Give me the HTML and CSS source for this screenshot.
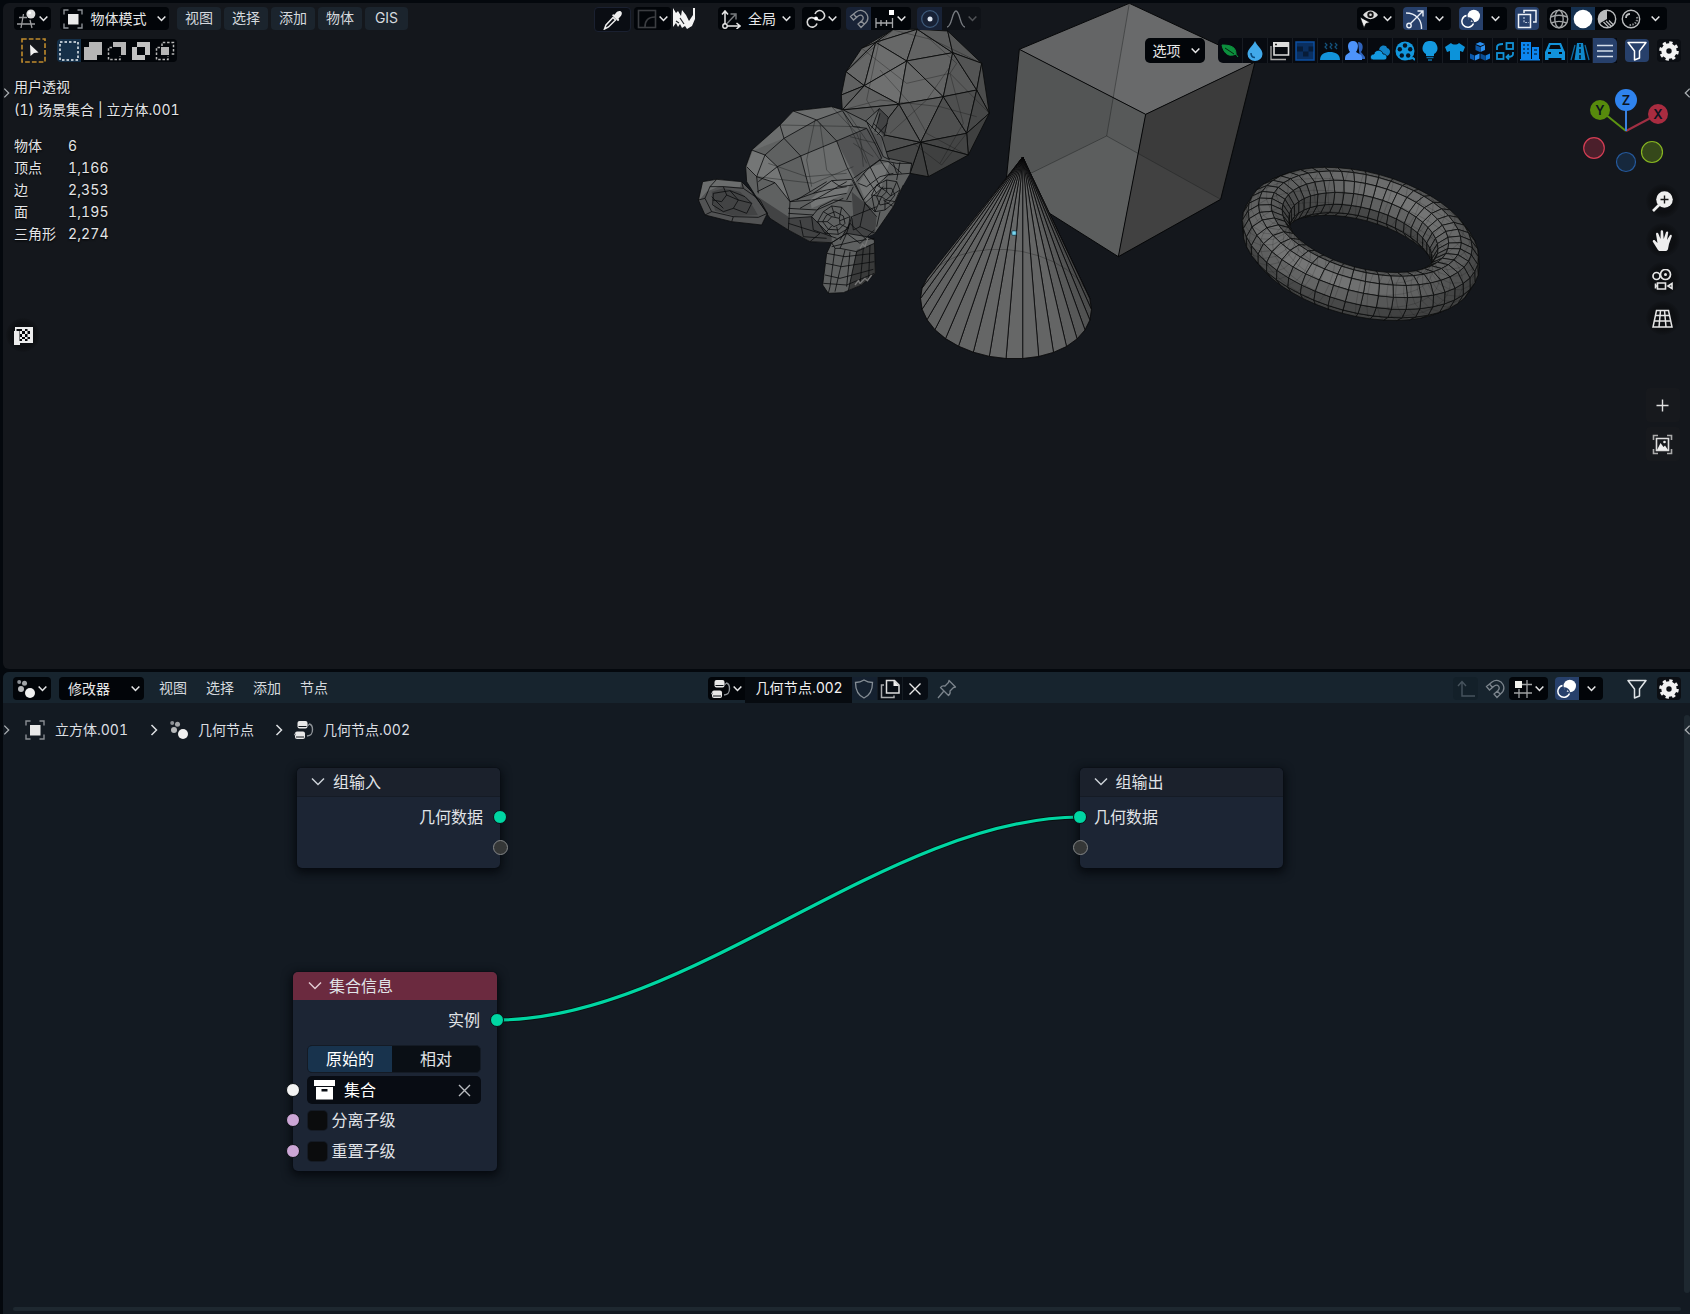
FILE: index.html
```html
<!DOCTYPE html>
<html lang="zh-CN">
<head>
<meta charset="utf-8">
<title>几何节点</title>
<link rel="stylesheet" href="styles.css">
</head>
<body>
<svg class="defs" width="0" height="0" aria-hidden="true">
  <symbol id="chev" viewBox="0 0 10 10"><path d="M1.5 3.2 5 6.8l3.500-3.600" fill="none" stroke="currentColor" stroke-width="1.400"/></symbol>
  <symbol id="right" viewBox="0 0 8 12"><path d="M1.500 1l5 5-5 5" fill="none" stroke="currentColor" stroke-width="1.500"/></symbol>
  <symbol id="editor3d" viewBox="0 0 20 20"><g fill="none" stroke="#9b9c9e" stroke-width="1.300"><path d="M0 15h18M2 8.500h8M6.500 5 4 19M13 11l2 8"/></g><circle cx="13.900" cy="5" r="4.500" fill="#dedede"/><circle cx="12.600" cy="3.800" r="1.500" fill="#fff"/></symbol>
  <symbol id="objmode" viewBox="0 0 20 20"><rect x="5" y="5" width="10.500" height="10.500" fill="#e9e9e9"/><path d="M1 5.500V1h4.500M14.500 1H19v4.500M19 14.500V19h-4.500M5.500 19H1v-4.500" fill="none" stroke="#8b8f94" stroke-width="1.400"/></symbol>
  <symbol id="dropper" viewBox="0 0 20 20"><path d="M11 5 12.500 3.500c2-2.500 4-3 5.500-2s1 3.500-1 5.500L15.500 8.500l.8 1.500-1.300 1.200-6-6L10.300 4z" fill="#eee"/><path d="M10 7.500 3 15l-1.500 4 4-2 7-7z" fill="none" stroke="#eee" stroke-width="1.500"/></symbol>
  <symbol id="magnet" viewBox="0 0 20 20"><path d="M1.500 7.500 7 3c4-3 9-1.500 11 2.500s.5 7-2.500 9.500l-3.500 3.500-3-3.500 4-3.500c1.500-1.500 1.500-3 .5-4.300s-2.800-1.200-4.300-.2L4.500 11zM4.500 5l3 3.500M15 15l-3-3.200" fill="none" stroke="currentColor" stroke-width="1.300"/></symbol>
  <symbol id="overlay" viewBox="0 0 20 20"><circle cx="12.800" cy="7" r="6.200" fill="#fff"/><path d="M5.500 6.500a6 6 0 1 0 7 8" fill="none" stroke="#fff" stroke-width="1.500"/><path d="M7 9a6 6 0 0 1 5.500 4" fill="none" stroke="#27406b" stroke-width="1.400"/><circle cx="9" cy="11" r="1.500" fill="#27406b"/></symbol>
  <symbol id="filter" viewBox="0 0 20 20"><path d="M1 1.500h18l-6.500 8.500v7L7.500 19v-9z" fill="none" stroke="currentColor" stroke-width="1.500" stroke-linejoin="round"/></symbol>
  <symbol id="gear" viewBox="0 0 20 20"><circle cx="10" cy="10" r="5.200" fill="none" stroke="#f2f2f2" stroke-width="5"/><circle cx="10" cy="10" r="8" fill="none" stroke="#f2f2f2" stroke-width="3.600" stroke-dasharray="3.140 3.140"/></symbol>
  <symbol id="geonodes" viewBox="0 0 20 20"><circle cx="3.200" cy="3" r="2" fill="#8d9196"/><circle cx="8.500" cy="4.200" r="2.500" fill="#a2a5a8"/><circle cx="5" cy="10" r="3" fill="#b6b8ba"/><circle cx="14" cy="14" r="5" fill="#f0f0f0"/></symbol>
  <symbol id="tree" viewBox="0 0 20 20"><rect x="3.500" y="1" width="10" height="7.500" rx="2" fill="#e8e8e8"/><rect x="1" y="11.500" width="10" height="7.500" rx="2" fill="#e8e8e8"/><path d="M4.500 6.500h8M2 17h8" stroke="#10161c" stroke-width="1"/><path d="M15 4c2.500.3 3.500 1.500 3.500 5.500s-1 6-5.500 6.500M0 14.500h2M13 5h2" fill="none" stroke="#8e9398" stroke-width="1.400"/></symbol>
</svg>

<div class="app">
<section class="viewport">
  <svg class="scene" id="scene" width="1690" height="669" viewBox="0 0 1690 669">
    <g id="sphere"></g>
    <g class="cube" transform="translate(980) scale(.33333)">
      <path fill="#696a6b" d="M448 10 825 186 497 343 118 148z"/>
      <path fill="#575959" d="M118 148 497 343 415 770 77 557z"/>
      <path fill="#3b3b3b" d="M497 343 825 186 722 598 415 770z"/>
      <path fill="#fff" opacity=".035" d="M380 408 77 557 415 770 722 598z"/>
      <path fill="#000" opacity=".04" d="M380 408 448 10 118 148 77 557z"/>
      <path class="dim" d="M448 10 380 408 77 557M380 408 722 598"/>
      <path class="edge" d="M448 10 825 186 722 598 415 770 77 557 118 148zM118 148 497 343 825 186M497 343 415 770"/>
    </g>
    <g class="monkey" transform="translate(680) scale(.33333)">
      <path class="f3" d="M68 545 110 538 185 545 215 575 262 640 245 675 155 665 75 645 55 600z"/>
      <path class="f2" d="M95 575 130 565 180 575 210 605 235 645 165 648 105 632z"/>
      <path class="f5" d="M68 545 110 538 185 545 180 562 120 558 80 575 58 600z"/>
      <path class="f3" d="M210 600 240 625 262 640 245 675 165 660 235 648z"/>
      <path class="f4" d="M340 333 455 320 490 330 560 365 605 410 625 475 695 490 690 520 670 555 640 620 585 700 500 735 455 728 390 725 325 690 270 655 225 585 200 545 197 500 215 450 300 375z"/>
      <path class="f5" d="M340 333 455 320 487 332 410 360 312 415 218 452 300 375zM362 468 470 423 530 545 390 575z"/>
      <path class="f6" d="M218 452 255 465 292 500 330 605 285 548 230 530 200 500zM455 542 515 540 500 580 395 625 390 600zM570 500 630 485 600 570 560 610 535 550z"/>
      <path class="f2" d="M325 655 395 650 455 710 455 728 390 725 325 690zM515 575 555 610 590 650 585 700 500 735 490 700 520 650zM270 655 225 585 325 650 325 690z"/>
      <path class="f3" d="M470 423 560 385 605 410 610 470 550 510 530 540z"/>
      <path class="f4" d="M555 360 598 326 625 352 612 410 575 395z"/><path class="f2" d="M598 326 625 352 612 410 592 385z"/>
      <path class="f4" d="M455 728 500 700 560 710 583 720 586 820 545 855 490 878 445 880 428 855 440 760z"/>
      <path class="f1" d="M530 750 583 730 586 820 545 855 505 872z"/>
      <path class="dim" d="M300 375 540 380M230 530 400 550 520 500M405 360 380 480 395 560M420 370 440 510 470 540M265 490 380 530 500 520M500 335 600 480M490 335 560 490M510 410 590 430M520 430 580 470M540 400 550 500M455 320 530 400 570 500"/>
      <g class="edge">
        <path d="M68 545 110 538 185 545 215 575 262 640 245 675 155 665 75 645 55 600zM110 538 90 560 75 595 95 635 75 645M185 545 190 565 130 560 90 560M190 565 240 600 262 640M55 600 75 595M95 635 160 650 235 652 262 640M100 580 150 572 195 590 215 610M100 580 98 615 130 635M130 560 140 585 125 605 98 600M150 572 175 600 215 610 200 640M140 585 175 600 160 625 130 635M160 625 200 640M95 590 130 625M155 665 160 650"/>
        <path d="M340 333 455 320 490 330 560 365 605 410 625 475 695 490 690 520M585 700 640 620 670 555M455 728 390 725 325 690 270 655 225 585 200 545 197 500 215 450 300 375 340 333M340 333 410 360 487 332M410 360 312 415 255 465 230 530M410 360 470 423 560 385M312 415 362 468 292 500 235 545M362 468 470 423 500 500 550 600M292 500 330 605 400 580 455 542 515 538M255 465 292 500M215 450 255 465M362 468 390 575M300 375 312 415M200 500 230 530 235 580M232 575 285 548 330 605 325 690M230 530 285 548M487 332 520 380 560 385 590 440 605 475 570 500 520 535M560 365 610 470 630 480M555 365 598 326 625 352 612 410M575 385 598 326M585 395 600 340M592 405 622 370M580 370 612 400"/>
        <path d="M325 655 395 650 455 710M330 605 395 600 500 580M325 625 410 630 490 595M325 640 400 645M395 650 420 620 460 600 515 605M455 542 480 560 520 555M400 580 440 570 500 560M350 600 440 545M360 625 500 545M515 538 555 610 590 650M520 560 500 600M390 725 420 700 325 670M360 660 370 710 440 715M395 650 400 690 470 715M515 650 520 690 540 680 585 700M540 680 555 610 610 560M455 728 500 700 540 730 583 690M500 700 515 650 590 620M480 720 510 670 560 720"/>
        <path d="M413 665 430 635 455 618 485 622 510 650 505 685 475 703 435 700zM428 665 440 645 465 635 490 648 495 670 475 690 445 688zM442 665 455 650 478 655 480 672 462 680zM413 665H442M430 635 455 650M455 618 465 650M485 622 478 655M510 650 480 662M505 685 480 672M475 703 470 680M435 700 455 678"/>
        <path d="M530 545 560 510 600 480 650 490 695 490M550 600 575 570 625 525 690 520M535 550 560 560 600 530 640 520M570 500 600 560M550 520 590 580M600 480 630 525M640 490 650 520M625 485 665 520M660 487 650 540M575 585 590 555 620 540 650 545 660 570 645 605 615 630 585 635zM590 590 605 565 635 565 645 585 625 610 600 615zM605 590 620 575 632 588 618 600zM575 585 605 590M590 555 620 575M620 540V575M650 545 632 588M660 570 632 588M645 605 618 600M615 630V600M585 635 605 590M610 600 640 620M600 635 590 680M555 610 585 635"/>
        <path d="M455 728 500 700 560 710 583 720 586 820 545 855 490 878 445 880 428 855 440 760zM455 728 465 745 450 860 445 880M500 700 480 745 530 755 583 730M465 745 480 745M530 755 505 872M495 750 480 810 465 875M440 760 495 770 583 760M438 790 485 800 583 785M435 825 480 835 580 808M430 850 500 855 583 820M550 745 540 855M570 735 566 835M510 755 500 860M455 740 520 725 583 715"/>
      </g>
      <path d="M525 855 535 842 540 850 555 835 562 842 575 825M540 745 548 732 555 740 563 715" fill="none" stroke="#777" stroke-width="4"/>
    </g>
    <g id="cone"></g>
    <g id="torus"></g>
    <rect x="1011.800" y="230.800" width="4.500" height="4.500" rx="1" fill="#7ad7f0" stroke="#103040" stroke-width=".8"/>
  </svg>

  <header class="bar row1">
    <div class="left">
      <button class="btn w37"><svg class="i20"><use href="#editor3d"/></svg><svg class="c10"><use href="#chev"/></svg></button>
      <button class="btn mode"><svg class="i20"><use href="#objmode"/></svg><span>物体模式</span><svg class="c10"><use href="#chev"/></svg></button>
      <nav class="menus"><a>视图</a><a>选择</a><a>添加</a><a>物体</a><a>GIS</a></nav>
    </div>
    <div class="center">
      <button class="btn outlined w37"><svg class="i20"><use href="#dropper"/></svg></button>
      <button class="btn w37 g3 end"><svg class="i20 faint" viewBox="0 0 20 20"><rect x="1.500" y="1.500" width="17" height="17" fill="none" stroke="#3b3d41" stroke-width="1.600"/><path d="M8 18c0-7 3-10 10-10" fill="none" stroke="#3b3d41" stroke-width="1.600"/></svg><svg class="c10"><use href="#chev"/></svg></button>
      <span class="g2 tex"><svg width="23" height="22" viewBox="0 0 23 22"><rect width="23" height="22" fill="#16191e"/><path fill="#f4f4f4" d="M0 1 3 6 5 4 8 9 9 3 13 8 16 14 18 11 20 8 20 1 22 1 22 12 19 19 14 22 12 19 9 21 7 17 5 20 3 16 0 20z"/><path d="M7 11 11 17M3 14 6 16" stroke="#24272b" stroke-width="1.200"/></svg></span>
      <button class="btn orient"><svg class="i20" viewBox="0 0 20 20"><path d="M4 15V3M1 5.500 4 2l3 3.500M6 17h12M15.500 14 19 17l-3.500 3" fill="none" stroke="#e6e6e6" stroke-width="1.500"/><circle cx="4" cy="17" r="2.200" fill="none" stroke="#e6e6e6" stroke-width="1.400"/><path d="M6 14.500 14 6M9.500 5H15v5.500" fill="none" stroke="#7a7d80" stroke-width="1.400"/></svg><span>全局</span><svg class="c10"><use href="#chev"/></svg></button>
      <button class="btn pivot"><svg class="i20" viewBox="0 0 20 20"><path d="M9 5c1-3 5-5 8-2s1.500 7-2 8c-1.500.5-3 0-4.500-1" fill="none" stroke="#d8d8d8" stroke-width="1.600"/><path d="M11 14.500c-1 4-5.500 4.500-8 2.500S.8 11 3 9.500s4-1 5.500 0" fill="none" stroke="#d8d8d8" stroke-width="1.600"/><circle cx="10" cy="9.500" r="2" fill="#fff"/></svg><svg class="c10"><use href="#chev"/></svg></button>
      <div class="grp g6"><button class="btn tint w25 mag"><svg class="i20"><use href="#magnet"/></svg></button><button class="btn w40"><svg class="i20" viewBox="0 0 20 20"><path d="M1 9v10M1 14h17M6 11v6M11.500 11v6M17.500 9v10" stroke="#a5a7a9" stroke-width="1.300"/><rect x="14" y="1" width="5" height="5" fill="#fff"/></svg><svg class="c10"><use href="#chev"/></svg></button></div>
      <div class="grp g7"><button class="btn tint w25"><svg class="i20" viewBox="0 0 20 20"><circle cx="10" cy="10" r="8.300" fill="none" stroke="#3c5878" stroke-width="1.300"/><circle cx="10" cy="10" r="2.500" fill="#dfe6ef"/></svg></button><button class="btn ghost w39"><svg class="i20" viewBox="0 0 20 20"><path d="M1 18c5 0 5-16 9-16s4 16 9 16" fill="none" stroke="#777b80" stroke-width="1.400"/></svg><svg class="c10 dimmed"><use href="#chev"/></svg></button></div>
    </div>
    <div class="rightside">
      <button class="btn w38 eye"><svg class="i20" viewBox="0 0 20 20"><path d="M4 6c4-6 11-6 15 0-4 5.500-11 5.500-15 0z" fill="#ddd"/><circle cx="11.500" cy="5.700" r="3.200" fill="#111"/><circle cx="11.500" cy="5.700" r="1.300" fill="#ddd"/><path d="M1 8l10 5.500-4 1L5 19z" fill="#eee" stroke="#020406" stroke-width=".7"/></svg><svg class="c10"><use href="#chev"/></svg></button>
      <div class="grp"><button class="btn on w24"><svg class="i20" viewBox="0 0 20 20"><path d="M1 4c10 0 16 7 15.500 16M5 15 18 2M12.500 2H18v5.500" fill="none" stroke="#e8edf5" stroke-width="1.400"/><circle cx="4" cy="16.500" r="2.200" fill="none" stroke="#e8edf5" stroke-width="1.400"/></svg></button><button class="btn w24"><svg class="c10"><use href="#chev"/></svg></button></div>
      <div class="grp"><button class="btn on w24"><svg class="i20"><use href="#overlay"/></svg></button><button class="btn w24"><svg class="c10"><use href="#chev"/></svg></button></div>
      <button class="btn on w24"><svg class="i20" viewBox="0 0 20 20"><path d="M7 4V1.500h12V13h-3M1.500 5.500h12v13h-12z" fill="none" stroke="#f0f3f8" stroke-width="1.500"/><path d="M7 8v5.500h5" fill="none" stroke="#b9c6da" stroke-width="1.200" stroke-dasharray="2 1.300"/></svg></button>
      <div class="grp shade"><button class="btn w24"><svg class="i20" viewBox="0 0 20 20"><g fill="none" stroke="#a0a2a4" stroke-width="1.400"><circle cx="10" cy="10" r="8.700"/><ellipse cx="10" cy="10" rx="4.200" ry="8.700"/><path d="M1.500 8c5-2 12-2 17 0M2 14c5-2 11-2 16 0"/></g></svg></button><button class="btn navy w24"><svg class="i20" viewBox="0 0 20 20"><circle cx="10" cy="10" r="9.300" fill="#fff"/></svg></button><button class="btn w24"><svg class="i20" viewBox="0 0 20 20"><path d="M10 1.300A8.700 8.700 0 0 0 2.500 14.500L10 10z" fill="#b9bbbd"/><circle cx="10" cy="10" r="8.700" fill="none" stroke="#b9bbbd" stroke-width="1.400"/><path d="M9 12l5.500 5.500M6.500 13l5 5M12 11.500l4.500 4.500" fill="none" stroke="#b9bbbd" stroke-width="1.300"/></svg></button><button class="btn w24"><svg class="i20" viewBox="0 0 20 20"><circle cx="10" cy="10" r="8.700" fill="none" stroke="#b9bbbd" stroke-width="1.400"/><path d="M5 9c0-2.500 1.500-4 4-4" fill="none" stroke="#b9bbbd" stroke-width="1.800"/><path d="M16 8c1 5-3 8.500-8 8" fill="none" stroke="#85888b" stroke-width="2.200" stroke-dasharray="1.500 1.300"/></svg></button><button class="btn w24"><svg class="c10"><use href="#chev"/></svg></button></div>
    </div>
  </header>

  <div class="bar row2">
    <div class="tool"><svg width="25" height="25" viewBox="0 0 25 25"><rect x="1" y="1" width="23" height="23" fill="none" stroke="#c08c2c" stroke-width="1.600" stroke-dasharray="4.700 2.100"/><path d="M9 6.500 17.500 14.500 13 15 9.500 18z" fill="#f0f0f0"/></svg></div>
    <div class="grp seltools">
      <button class="btn navy2"><svg class="i20" viewBox="0 0 20 20"><rect x="1" y="1" width="18" height="18" fill="none" stroke="#e9f0f5" stroke-width="1.500" stroke-dasharray="2.500 2"/></svg></button>
      <button class="btn"><svg class="i20" viewBox="0 0 20 20"><path d="M6 1h13v13h-5v5H1V6h5z" fill="#b5b5b5"/></svg></button>
      <button class="btn"><svg class="i20" viewBox="0 0 20 20"><path d="M6 1h13v13h-5V6H6z" fill="#b5b5b5"/><path d="M5 6.500H1.500V18.500H13V15" fill="none" stroke="#b5b5b5" stroke-width="1.500" stroke-dasharray="2.500 1.800"/></svg></button>
      <button class="btn"><svg class="i20" viewBox="0 0 20 20"><path fill-rule="evenodd" d="M6 1h13v13h-5v5H1V6h5zM6 6v8h8V6z" fill="#c2c2c2"/></svg></button>
      <button class="btn"><svg class="i20" viewBox="0 0 20 20"><rect x="6" y="6" width="8" height="8" fill="#b5b5b5"/><path d="M7 5V1.500H18.500V13H15M5 6.500H1.500V18.500H13V15" fill="none" stroke="#b5b5b5" stroke-width="1.500" stroke-dasharray="2.500 1.800"/></svg></button>
    </div>
    <div class="row2right">
      <button class="btn options"><span>选项</span><svg class="c10"><use href="#chev"/></svg></button>
      <div class="strip">
        <i><svg class="i20" viewBox="0 0 20 20"><path d="M2 4c9 0 14 2 14 9-6 3-12 1-14-9zM15 12l3 4" fill="#0c8f3d" stroke="#0c8f3d"/><path d="M5 7l9 6" stroke="#05230f" stroke-width="1"/></svg></i>
        <i><svg class="i20" viewBox="0 0 20 20"><path d="M10 0c2 5 7.500 8 7.500 13a7.500 7 0 0 1-15 0c0-5 5.500-8 7.500-13z" fill="#41a9ea"/><path d="M6 12c0 3 2 4.500 4 4.500" fill="none" stroke="#0a4d80" stroke-width="1.600"/></svg></i>
        <i><svg class="i20" viewBox="0 0 20 20"><path d="M4 2h14.500v12H4z" fill="none" stroke="#ddd" stroke-width="1.600"/><path d="M3 1h16v5H3z" fill="#ddd"/><path d="M5 3.500h2" stroke="#222" stroke-width="1.500"/><path d="M1 5v13.500h15" fill="none" stroke="#aaa" stroke-width="1.300"/></svg></i>
        <i><svg class="i20" viewBox="0 0 20 20"><rect x="1" y="1" width="18" height="18" fill="#0a2f60" stroke="#0d4fa0" stroke-width="1.500"/><path d="M2 5.500h6v5H2zM8 10.500h5.500v5H8zM13.500 5.500h4.700v5h-4.700z" fill="#071c38"/></svg></i>
        <i><svg class="i20" viewBox="0 0 20 20"><path d="M0 19c0-6 5-8 10-8s10 2 10 8z" fill="#1394dc"/><path d="M5 2l2 2-2 2 2 2M10 2l2 2-2 2 2 2M15 2l2 2-2 2 2 2" fill="none" stroke="#14527c" stroke-width="1.200"/></svg></i>
        <i><svg class="i20" viewBox="0 0 20 20"><path d="M13 1c5 0 6 6 3 10l4 5v2h-5z" fill="#2e62bb"/><path d="M8 0c6 0 6 7 3 11l5 3c1 1 1 3 1 5H0c0-2 0-4 1-5l4-3C2 7 2 0 8 0z" fill="#4d93fa"/></svg></i>
        <i><svg class="i20" viewBox="0 0 20 20"><path d="M9 10c0-6 7-7 8-3 4 1 4 6 0 8l-4-1z" fill="#1283c7"/><path d="M3 19c-4-1-3-6 1-6 1-5 8-5 9 0 5 0 5 6 1 6z" fill="#149ae0" stroke="#070a10" stroke-width=".8"/></svg></i>
        <i><svg class="i20" viewBox="0 0 20 20"><circle cx="10" cy="10" r="9.500" fill="#1297dd"/><g fill="#061522"><circle cx="10" cy="4.500" r="2.200"/><circle cx="15.200" cy="8.300" r="2.200"/><circle cx="13.200" cy="14.500" r="2.200"/><circle cx="6.800" cy="14.500" r="2.200"/><circle cx="4.800" cy="8.300" r="2.200"/></g><path d="M14 18l4-1 2 2" stroke="#1297dd" stroke-width="2"/></svg></i>
        <i><svg class="i20" viewBox="0 0 20 20"><path d="M10 0a7 7 0 0 1 4 13v2H6v-2A7 7 0 0 1 10 0z" fill="#1499df"/><path d="M6.500 16.500h7M8 19h4" stroke="#0f6fa6" stroke-width="1.500"/></svg></i>
        <i><svg class="i20" viewBox="0 0 20 20"><path d="M6 2c2 2 6 2 8 0l6 4-2 5-3-1v9H5v-9l-3 1-2-5z" fill="#0c93da"/></svg></i>
        <i><svg class="i20" viewBox="0 0 20 20"><path d="M5.500 4 10 6v5L5.500 9zM0 12.500l4.500 2v5L0 17.500z" fill="#0b57a8"/><path d="M10.500 6 15 4v5l-4.500 2zM5 14.500l4.500-2v5L5 19.500zM5.500 3 10 1l5 2-4.500 2z" fill="#2a8ff0"/><path d="M10.500 12.500l4.500 2v5l-4.500-2z" fill="#0b4d92"/><path d="M15.500 14.500l4.500-2v5l-4.500 2z" fill="#167fdd"/></svg></i>
        <i><svg class="i20" viewBox="0 0 20 20"><g fill="none" stroke="#1292d6" stroke-width="1.800"><rect x="11.500" y="2" width="6.500" height="6"/><rect x="2" y="12" width="6.500" height="6"/><path d="M2 9V6q0-3 6-3M18 11v2q0 3-6 3M14 13.500 11.500 16l2.500 2.500"/></g></svg></i>
        <i><svg class="i20" viewBox="0 0 20 20"><path d="M1 1h10v18H1zM12 6h7v13h-7zM0 18h20v1.500H0z" fill="#0c86ef"/><path d="M3 4h2M7 4h2M3 8h2M7 8h2M3 12h2M7 12h2M14 9h3M14 13h3" stroke="#06335e" stroke-width="1.500"/></svg></i>
        <i><svg class="i20" viewBox="0 0 20 20"><path fill-rule="evenodd" d="M4 2h12l2.500 6 1.500 3v8h-3.500v-2h-13v2H0v-8l1.500-3zM5.500 4 4 8h12l-1.500-4zM3 11v2h3v-2zM14 11v2h3v-2z" fill="#1292da"/></svg></i>
        <i><svg class="i20" viewBox="0 0 20 20"><path d="M7 2h6l2.500 17h-11z" fill="#1089cc"/><path d="M10 3v3M10 8v4M10 14v4" stroke="#041421" stroke-width="1.500"/><path d="M5 4 1 19M15 4l4 15" stroke="#0d6ba2" stroke-width="1.300"/></svg></i>
        <i class="sel"><svg class="i20" viewBox="0 0 20 20"><path d="M2 4.500h16M2 10h16M2 15.500h16" stroke="#d5deea" stroke-width="1.300"/></svg></i>
      </div>
      <button class="btn on w24 fil"><svg class="i20"><use href="#filter"/></svg></button>
      <button class="btn gearb w24"><svg class="i20"><use href="#gear"/></svg></button>
    </div>
  </div>

  <div class="vbody">
    <div class="info">
      <p>用户透视</p>
      <p class="path">(1) 场景集合 | 立方体.001</p>
      <dl><dt>物体</dt><dd>6</dd><dt>顶点</dt><dd>1,166</dd><dt>边</dt><dd>2,353</dd><dt>面</dt><dd>1,195</dd><dt>三角形</dt><dd>2,274</dd></dl>
      <div class="round checker"><svg width="19" height="19" viewBox="0 0 19 19"><path fill="#ececec" d="M1 1h18v16H6v2H0V5h1z"/><path fill="#07090b" d="M2.500 3H8v2H5.500v10H5V5H2.500zM11 3h2.500v2H11zM8 5h3v3H8zM13.500 5H16v3h-2.500zM11 8h2.500v3H11zM6 8h2v3H6zM8 11h3v2H8zM13.500 11H16v2h-2.500zM11 13h2.500v2H11zM6 13h2v2H6z"/></svg></div>
    </div>
    <div class="navcol">
      <svg class="gizmo" width="90" height="90" viewBox="1580 85 90 90">
        <path d="M1626 131 1600 110" stroke="#5d9412" stroke-width="2"/><path d="M1626 131 1658 114" stroke="#a02f43" stroke-width="2"/><path d="M1626 131V100" stroke="#3a82e0" stroke-width="2"/>
        <circle cx="1594" cy="148" r="10.300" fill="#4b1f2b" stroke="#d23d53" stroke-width="1.200"/><circle cx="1626" cy="162" r="9.500" fill="#16283d" stroke="#25599c" stroke-width="1.200"/><circle cx="1652" cy="152" r="10.500" fill="#35481a" stroke="#86b421" stroke-width="1.200"/>
        <circle cx="1600" cy="110" r="10" fill="#578a0c"/><circle cx="1658" cy="114" r="10" fill="#a92c40"/><circle cx="1626" cy="100" r="11" fill="#2f83ee"/>
        <text x="1600" y="114.700">Y</text><text x="1658" y="118.700">X</text><text x="1626" y="104.700">Z</text>
      </svg>
      <div class="round z1"><svg class="i21" viewBox="0 0 21 21"><circle cx="12.500" cy="8.500" r="8.300" fill="#eee"/><path d="M7 14l-6 6" stroke="#eee" stroke-width="2.600"/><path d="M8.500 8.500h8M12.500 4.500v8" stroke="#151515" stroke-width="1.400"/></svg></div>
      <div class="round"><svg class="i21" viewBox="0 0 21 21"><path d="M6 20 1 12c-1-1.500 1-2.500 2-1.500l2.500 2.500L4 4c0-1.500 2-1.800 2.400-.3L8.500 9 8.700 1.500c0-1.600 2.200-1.600 2.400 0L11.700 9 14 2.300c.5-1.500 2.400-1 2.200.5L15 10l2.700-4.500c.9-1.300 2.600-.4 2 1L17 14l-1 5c-.3 1-1 1.700-2 2H8c-1 0-1.500-.5-2-1z" fill="#eee"/></svg></div>
      <div class="round cam"><svg class="i21" viewBox="0 0 21 21"><circle cx="4.500" cy="7" r="3.500" fill="none" stroke="#e6e6e6" stroke-width="1.700"/><circle cx="13.500" cy="5.500" r="5" fill="none" stroke="#e6e6e6" stroke-width="1.700"/><circle cx="13.500" cy="5.500" r="1.500" fill="#e6e6e6"/><path d="M5.500 14h8v6h-8zM5.500 17H3.500M3.500 14.500v5M20 14.500l-4 2.500 4 2.500z" fill="none" stroke="#e6e6e6" stroke-width="1.600"/></svg></div>
      <div class="round"><svg class="i21" viewBox="0 0 21 21"><path d="M4.500 2.500h12l3.500 16.500H1zM3.500 7.500h14M2.500 13h16M8.500 2.500 7 19M12.500 2.500 14 19" fill="none" stroke="#e6e6e6" stroke-width="1.500"/></svg></div>
      <div class="round flatbg plus"><svg class="i21" viewBox="0 0 21 21"><path d="M4.500 10.500h12M10.500 4.500v12" stroke="#e0e0e0" stroke-width="1.400"/></svg></div>
      <div class="round flatbg"><svg class="i21" viewBox="0 0 21 21"><path d="M1.500 6V1.500H6M15 1.500h4.500V6M19.500 15v4.500H15M6 19.500H1.500V15" fill="none" stroke="#aaa" stroke-width="1.600"/><path d="M4.500 4.500h12v12h-12z" fill="none" stroke="#ddd" stroke-width="1.600"/><path d="M5 16l3.500-7 3 4 1.500-1.500 3 4.500z" fill="#eee"/><circle cx="12.500" cy="8" r="1.300" fill="#eee"/></svg></div>
    </div>
  </div>
  <svg class="tab tl" width="8" height="12"><use href="#right"/></svg>
  <svg class="tab tr" width="8" height="12"><use href="#right"/></svg>
</section>

<section class="nodes">
  <header class="bar nhead">
    <div class="nleft">
      <button class="btn w38"><svg class="i20"><use href="#geonodes"/></svg><svg class="c10"><use href="#chev"/></svg></button>
      <button class="btn modifier"><span>修改器</span><svg class="c10"><use href="#chev"/></svg></button>
      <nav class="flat"><a>视图</a><a>选择</a><a>添加</a><a>节点</a></nav>
    </div>
    <div class="ncenter">
      <button class="btn w37 sq"><svg class="i20"><use href="#tree"/></svg><svg class="c10"><use href="#chev"/></svg></button>
      <span class="name">几何节点.002</span>
      <span class="mini shield"><svg class="i20" viewBox="0 0 20 20"><path d="M10 1c3 2 5.500 2.500 8.500 2.500C18.500 11 16.500 16 10 19 3.500 16 1.500 11 1.500 3.500 4.500 3.500 7 3 10 1z" fill="none" stroke="#858d95" stroke-width="1.300"/></svg></span>
      <span class="mini"><svg class="i20" viewBox="0 0 20 20"><path d="M6.500 1.500h8l4.500 4.500v8H6.500z" fill="none" stroke="#ddd" stroke-width="1.500"/><path d="M13.500 1v6H19z" fill="#eee"/><path d="M4 6H1.500v12.500H14V16.500" fill="none" stroke="#a9abad" stroke-width="1.500"/></svg></span>
      <span class="mini last"><svg class="i20" viewBox="0 0 20 20"><path d="M4.500 4.500l11 11M15.500 4.500l-11 11" stroke="#e8e8e8" stroke-width="1.400"/></svg></span>
      <svg class="i20 pin" viewBox="0 0 20 20"><path d="M12 1.500 18.500 8l-2 .5-3.500 3.500c.5 2 0 3.500-1.500 4.500l-8-8c1-1.500 2.500-2 4.500-1.500l3.500-3.500zM6.500 12.500 1 19" fill="none" stroke="#7b848c" stroke-width="1.300" stroke-linejoin="round"/></svg>
    </div>
    <div class="nright">
      <span class="mini up"><svg class="i20" viewBox="0 0 20 20"><path d="M6 3v14h13M2 7l4-4.500L10 7" fill="none" stroke="#47535d" stroke-width="1.400"/></svg></span>
      <span class="nmag"><svg class="i20"><use href="#magnet"/></svg></span>
      <button class="btn w39"><svg class="i20" viewBox="0 0 20 20"><path d="M6 10v9M14 1v18M9 5.500h10M1 14h18" stroke="#a0a2a4" stroke-width="1.300"/><rect x="2" y="2" width="7" height="7" fill="#f2f2ee"/></svg><svg class="c10"><use href="#chev"/></svg></button>
      <div class="grp nover"><button class="btn on w24"><svg class="i20"><use href="#overlay"/></svg></button><button class="btn w24"><svg class="c10"><use href="#chev"/></svg></button></div>
      <span class="nfil"><svg class="i20"><use href="#filter"/></svg></span>
      <button class="btn gearb w24"><svg class="i20"><use href="#gear"/></svg></button>
    </div>
  </header>
  <div class="crumbs">
    <svg class="i20"><use href="#objmode"/></svg><span class="c1">立方体.001</span>
    <svg class="sep" width="8" height="12"><use href="#right"/></svg>
    <svg class="i20"><use href="#geonodes"/></svg><span class="c2">几何节点</span>
    <svg class="sep" width="8" height="12"><use href="#right"/></svg>
    <svg class="i20"><use href="#tree"/></svg><span class="c3">几何节点.002</span>
  </div>

  <svg class="links" width="1690" height="642" viewBox="0 672 1690 642"><path d="M497 1020C688 1020 889 817 1080 817" fill="none" stroke="#07110f" stroke-width="5"/><path d="M497 1020C688 1020 889 817 1080 817" fill="none" stroke="#00d6a3" stroke-width="3.200"/></svg>

  <article class="node n-in">
    <h3><svg width="14" height="9" viewBox="0 0 14 9"><path d="M1 1.500l6 6 6-6" fill="none" stroke="#ccd1d7" stroke-width="1.500"/></svg>组输入</h3>
    <div class="out">几何数据</div>
    <b class="sock geo s-a"></b><b class="sock ext s-b"></b>
  </article>
  <article class="node n-out">
    <h3><svg width="14" height="9" viewBox="0 0 14 9"><path d="M1 1.500l6 6 6-6" fill="none" stroke="#ccd1d7" stroke-width="1.500"/></svg>组输出</h3>
    <div class="in">几何数据</div>
    <b class="sock geo s-c"></b><b class="sock ext s-d"></b>
  </article>
  <article class="node n-coll">
    <h3><svg width="14" height="9" viewBox="0 0 14 9"><path d="M1 1.500l6 6 6-6" fill="none" stroke="#e3cbd3" stroke-width="1.500"/></svg>集合信息</h3>
    <div class="out">实例</div>
    <div class="toggle"><span class="act">原始的</span><span>相对</span></div>
    <div class="field"><svg width="21" height="20" viewBox="0 0 21 20"><path d="M0 0h21v6H0z" fill="#fff"/><path fill-rule="evenodd" d="M2 7h17v12.500H2zM7.500 9v2.500h6V9z" fill="#fff"/></svg><span>集合</span><svg class="x" width="13" height="13" viewBox="0 0 13 13"><path d="M1 1l11 11M12 1 1 12" stroke="#b9bcc0" stroke-width="1.400"/></svg></div>
    <label class="chk"><i></i>分离子级</label>
    <label class="chk"><i></i>重置子级</label>
    <b class="sock geo s-e"></b><b class="sock wht s-f"></b><b class="sock bool s-g"></b><b class="sock bool s-h"></b>
  </article>

  <svg class="tab nl" width="8" height="12"><use href="#right"/></svg>
  <i class="vscroll"></i><i class="hscroll"></i>
  <svg class="tab nr" width="8" height="12"><use href="#right"/></svg>
</section>
</div>
<script src="scene.js"></script>
</body>
</html>
```
FILE: styles.css
```css
*{box-sizing:border-box}
body{margin:0;width:1690px;height:1314px;overflow:hidden;background:#04080d;color:#e3e4e6;font:14px/20px Inter,"Noto Sans CJK SC",sans-serif}
svg{display:block;flex:none}
.defs{position:absolute}
i,b{font-style:normal;display:block}
h3,p,dl,dd{margin:0;font-weight:400}
.app{display:grid;grid-template-rows:666px 642px;row-gap:3px;padding:3px 0 0 3px}
.viewport{position:relative;background:#14171c;border-radius:6px 0 0 6px;overflow:hidden;display:flex;flex-direction:column}
.scene{position:absolute;left:-3px;top:-3px}
.bar{position:relative;display:flex}
.row1{height:27px;padding:4px 23px 0 11px}
.row2{height:25px;margin-top:8px;padding-left:17px}
.left{display:flex;width:580px}
.center,.rightside,.grp,.menus,.nleft,.ncenter,.nright,.flat{display:flex}
.rightside{margin-left:auto;gap:8px}
.btn{font:inherit;color:#e6e7e8;border:0;margin:0;padding:0;background:#020509;height:23px;border-radius:4px;display:flex;align-items:center;justify-content:center;gap:1px;white-space:nowrap}
.grp .btn{border-radius:0}
.grp .btn:first-child{border-radius:4px 0 0 4px}
.grp .btn:last-child{border-radius:0 4px 4px 0}
.i20{width:20px;height:20px}
.i21{width:21px;height:21px}
.c10{width:11px;height:11px}
.dimmed{opacity:.3}
.w24{width:24px}.w25{width:25px}.w37{width:37px}.w38{width:38px}.w39{width:39px}.w40{width:40px}
.eye{gap:3px}
.g2{margin-left:2px}.g3{margin-left:3px}.g6{margin-left:5px}.g7{margin-left:6px}
.btn.on{background:#27406b;color:#fff}
.btn.navy{background:#15304f}
.btn.tint{background:#182236}
.btn.ghost{background:#0e1217cc}
.outlined{background:#0a0d13;border:1px solid #1a2030;height:25px}
.mag{color:#8c9096}
.mode{width:109px;margin-left:9px;gap:8px}
.mode span{margin-right:1px}
.menus{margin-left:8px;gap:3px}
.menus a{width:44px;height:23px;border-radius:4px;background:#1b242d;text-align:center;line-height:22px;color:#d5d9dd}
.menus a:last-child{width:43px}
.tex{width:24px}
.orient{width:77px;margin-left:21px;gap:5px}
.orient span{margin-left:2px}
.pivot{width:39px;margin-left:7px}
.tool{width:25px;height:25px;margin-left:1px}
.seltools{margin-left:11px;padding-top:1px}
.seltools .btn{width:24px}
.btn.navy2{background:#153049}
.row2right{display:flex;margin-left:auto;padding-right:9px}
.options{width:60px;height:25px;gap:9px;border-radius:5px}
.options span{margin-left:3px}
.strip{display:flex;margin-left:13px;height:25px;background:#070a10;border-radius:5px 0 0 5px}
.strip i{width:25px;display:flex;align-items:center;justify-content:center;border-right:1px solid #171b22}
.strip .sel{background:#27406b;border-radius:0 5px 5px 0;border:0;width:24px}
.fil{margin:1px 0 0 8px}
.row2right .gearb{margin:1px 0 0 8px}
.gearb{background:#0b0e13}
.vbody{position:relative;display:flex;justify-content:space-between;font-weight:500}
.info{padding:13px 0 0 11px;line-height:22px;text-shadow:0 1px 2px #000;font-variant-numeric:tabular-nums}
.info p{height:23px;white-space:nowrap}
.info .path{word-spacing:.2px}
.info dl{display:grid;grid-template-columns:54px 60px;margin-top:13px;line-height:22px}
.info dd{letter-spacing:.1px}
.round{width:34px;height:34px;border-radius:50%;background:radial-gradient(circle,#0d0f12 50%,#0d0f1200 75%);display:flex;align-items:center;justify-content:center}
.flatbg{background:#17191d;border-radius:4px}
.checker{margin:73px 0 0 -8px}
.navcol{display:flex;flex-direction:column;align-items:flex-end;gap:5px;padding:22px 10.500px 0 0}
.gizmo{margin-right:9.500px}
.gizmo text{font:600 13px Inter,sans-serif;text-anchor:middle;fill:#0b1420}
.z1{margin-top:4px}
.plus{margin-top:48px}
.tab{position:absolute;color:#a9adb1;width:7px;height:12px}
.tl{left:0;top:84px}.tr{right:-1px;top:84px;transform:scaleX(-1)}
.nl{left:0;top:52px}.nr{right:-1px;top:52px;transform:scaleX(-1)}
.edge{fill:none;stroke:#060708;stroke-width:3}
.monkey .edge{stroke-width:2.400;stroke:#0a0b0c}
.dim{fill:none;stroke:#1b1d1e;stroke-opacity:.5;stroke-width:2.500}
.f1{fill:#393a3a}.f2{fill:#424344}.f3{fill:#525354}.f4{fill:#5f6161}.f5{fill:#6b6d6d}.f6{fill:#747676}

.nodes{position:relative;background:#131a22;border-radius:6px 0 0 0;overflow:hidden;display:flex;flex-direction:column}
.nhead{height:31px;background:#17242e;padding:5px 9px 0 10px}
.nleft{width:695px}
.modifier{width:85px;margin-left:8px;justify-content:space-between;padding:0 3px 0 9px}
.flat{margin-left:15px;gap:19px;line-height:22px;color:#d5dade}
.flat a{width:28px}
.name{width:107px;background:#070b10;text-align:center;line-height:22px;color:#f0f0f0;letter-spacing:.15px;padding-left:1px}
.sq{border-radius:4px 0 0 4px}
.mini{width:25px;height:23px;background:#080d14;display:flex;align-items:center;justify-content:center;border-right:1px solid #141b22}
.mini.last{border-radius:0 4px 4px 0;border:0}
.mini.shield{background:#152130;width:25.500px}
.pin{margin:2px 0 0 9.500px}
.nright{margin-left:auto}
.mini.up{background:#132029;border:0;border-radius:4px}
.nmag{color:#7b848c;width:29px;padding:2px 0 0 7px;margin-right:2px}
.nover{margin-left:7px}
.nfil{color:#dfe3e6;padding:2px 0 0;margin:0 10.500px 0 23.500px}
.crumbs{position:relative;display:flex;align-items:center;height:54px;padding-left:22px;color:#dcdfe2;font-variant-numeric:tabular-nums;white-space:nowrap}
.crumbs span{margin-left:10px;line-height:20px;margin-top:-1px}
.crumbs .sep{margin:0 11px 0 22px}
.crumbs .c1{width:73px}
.crumbs .c2{width:55px;margin-left:9px}
.crumbs .c3{margin-left:9px}
.links{position:absolute;left:-3px;top:0}
.node{position:absolute;background:#1c2534;border-radius:5px;box-shadow:0 3px 10px 2px #060a0f,0 0 0 1px #10161e;width:203px;font-size:16px;line-height:24px;color:#e0e3e7}
.node h3{height:29px;background:#1b212c;border-bottom:1px solid #151b25;border-radius:5px 5px 0 0;font-size:16px;line-height:27px;display:flex;align-items:center;gap:8px;padding-left:14px}
.node h3 svg{margin-top:-2px}
.n-in{left:294px;top:96px;height:100px}
.n-out{left:1076.500px;top:96px;height:100px}
.n-coll{left:290px;top:300px;height:199px;width:204px}
.n-coll h3{background:#6b2a3f;border:0;height:28px;padding-left:15px;gap:7px}
.out{text-align:right;padding:8px 17px 0 0}
.in{padding:8px 0 0 14.500px}
.toggle{display:flex;margin:13px 16px 0 14px;height:28px;border:1px solid #141b25;border-radius:5px;background:#0a0f15;line-height:27px;text-align:center;overflow:hidden}
.toggle span{flex:1}
.toggle .act{background:#18334d;color:#fff;flex:0 0 84px}
.field{display:flex;align-items:center;height:28px;margin:3px 16px 0 14px;background:#080c13;border-radius:5px;padding:0 10px 0 7px;color:#fff}
.field span{margin:0 0 0 9px}
.field .x{margin-left:auto}
.chk{display:flex;align-items:center;height:24px;margin:4px 0 0 15px}
.chk+.chk{margin-top:7px}
.chk i{width:19px;height:19px;border-radius:4px;background:#0b0c0d;margin-right:4.500px;box-shadow:0 0 0 1px #151b25}
.sock{position:absolute;width:14px;height:14px;border-radius:50%;border:1px solid #0a1014}
.geo{background:#00d6a3}.wht{background:#f4f4f4}.bool{background:#cca6d6}
.ext{width:15px;height:15px;background:#353737;border:1.500px solid #858788}
.s-a{right:-7px;top:42px}.s-b{right:-8px;top:71.500px}
.s-c{left:-7px;top:42px}.s-d{left:-7px;top:71.500px}
.s-e{right:-7px;top:41px}.s-f{left:-7px;top:111px}.s-g{left:-7px;top:141px}.s-h{left:-7px;top:171.500px}
.vscroll{position:absolute;right:0;top:43px;width:6px;height:578px;background:#1e2830;border-radius:3px}
.hscroll{position:absolute;left:10px;bottom:3px;width:1668px;height:4px;background:#1e2830;border-radius:3px}
```
FILE: scene.js
```js
const NS = 'http://www.w3.org/2000/svg';

function draw(parent, points, fill, stroke, width) {
  const p = document.createElementNS(NS, 'polygon');
  p.setAttribute('points', points.map(q => q[0].toFixed(1) + ',' + q[1].toFixed(1)).join(' '));
  p.setAttribute('fill', fill);
  p.setAttribute('stroke', stroke);
  p.setAttribute('stroke-width', width);
  parent.appendChild(p);
}

const grey = v => `rgb(${v | 0},${(v + 1) | 0},${(v + 1) | 0})`;

/* Torus: 48 x 12 quads, orthographic projection */
(function () {
  const g = document.getElementById('torus');
  const R = 97.5, r = 24, phi = 15 * Math.PI / 180, se = 0.49, ce = Math.sqrt(1 - se * se);
  const M = [Math.cos(phi), Math.sin(phi), 0];
  const B = [-Math.sin(phi) * se, Math.cos(phi) * se, ce];
  const N = [Math.sin(phi) * ce, -Math.cos(phi) * ce, se];
  const at = (u, v) => [0, 1, 2].map(k =>
    (R + r * Math.cos(v)) * (Math.cos(u) * M[k] + Math.sin(u) * B[k]) + r * Math.sin(v) * N[k]);
  const quads = [];
  const U = 48, V = 12, T = Math.PI * 2;
  for (let i = 0; i < U; i++) for (let j = 0; j < V; j++) {
    const u = (i + .5) / U * T, v = (j + .5) / V * T;
    const n = [0, 1, 2].map(k => Math.cos(v) * (Math.cos(u) * M[k] + Math.sin(u) * B[k]) + Math.sin(v) * N[k]);
    const pts = [[i, j], [i + 1, j], [i + 1, j + 1], [i, j + 1]].map(a => {
      const p = at(a[0] / U * T, a[1] / V * T);
      return [1360.7 + p[0], 243.9 + p[1]];
    });
    quads.push({ pts, z: at(u, v)[2], n });
  }
  quads.sort((a, b) => a.z - b.z);
  quads.filter(q => q.n[2] > 0).forEach(q => {
    const l = Math.max(0, -.15 * q.n[0] - .45 * q.n[1] + .88 * q.n[2]);
    draw(g, q.pts, grey(64 + 54 * l * l), '#0c0d0e', .75);
  });
  quads.filter(q => q.n[2] <= 0).forEach(q => draw(g, q.pts, 'none', 'rgba(15,16,17,.14)', .6));
})();

/* Cone: 32 sides */
(function () {
  const g = document.getElementById('cone'), apex = [1022.7, 157];
  const at = k => {
    const a = k * Math.PI / 16, x = 85.5 * Math.cos(a);
    return [1006 + x, 304 + 54.5 * Math.sin(a) + x * .065];
  };
  const rim = [];
  for (let k = 0; k < 32; k++) rim.push(at(k));
  for (let k = -2; k < 18; k++) {
    const t = (k + .5) / 16;
    draw(g, [apex, at(k), at(k + 1)], grey(t < .3 ? 72 + t * 100 : 103 - Math.abs(t - .5) * 14), '#070809', .8);
  }
  draw(g, rim, 'none', 'rgba(10,10,10,.3)', .9);
})();

/* Icosphere: facets placed at their projected vertices */
(function () {
  const g = document.getElementById('sphere');
  const v = {
    T: [712, 88], A: [640, 88], B: [803, 93], C: [905, 190], D: [928, 340], E: [865, 465], F: [745, 530], G: [690, 520],
    H: [605, 460], L: [487, 330], K: [484, 285], J: [498, 215], I: [545, 145], a: [587, 127], b: [680, 183], c: [818, 158],
    d: [553, 257], e: [657, 313], f: [790, 290], g: [890, 270], h: [722, 427], i: [860, 400], j: [590, 400]
  };
  const faces = 'IaA AaT Tab Tbc TcB BcC IaJ Jad JdK KdL abd bde bef bcf cfg cCg gCD dLe Lej efh fhi fgi giD iDE hiE hEF hFG hjH hHG ejh LjH';
  faces.split(' ').forEach(f => {
    const p = [...f].map(k => v[k]);
    const x = (p[0][0] + p[1][0] + p[2][0]) / 3, y = (p[0][1] + p[1][1] + p[2][1]) / 3;
    const dx = (x - 640) / 300, dy = (y - 230) / 330;
    const s = 116 - 42 * Math.hypot(dx, dy) - Math.max(0, dy) * 22;
    draw(g, p.map(q => [680 + q[0] / 3, q[1] / 3]), grey(s), '#08090a', .85);
  });
  const back = [[[498, 215], [640, 90], [760, 120], [905, 190]], [[600, 110], [560, 300], [620, 400]], [[730, 100], [830, 190], [810, 220], [928, 340]],
    [[600, 210], [690, 310], [740, 400], [860, 465]], [[487, 330], [600, 300], [780, 320], [890, 350]], [[810, 220], [850, 370], [780, 490]],
    [[545, 145], [680, 250], [810, 220]], [[630, 400], [740, 300], [810, 200]], [[700, 430], [785, 495], [860, 400]]];
  back.forEach(l => {
    const p = document.createElementNS(NS, 'polyline');
    p.setAttribute('points', l.map(q => (680 + q[0] / 3) + ',' + q[1] / 3).join(' '));
    p.setAttribute('fill', 'none');
    p.setAttribute('stroke', 'rgba(15,16,17,.4)');
    p.setAttribute('stroke-width', '.8');
    g.appendChild(p);
  });
})();
```
